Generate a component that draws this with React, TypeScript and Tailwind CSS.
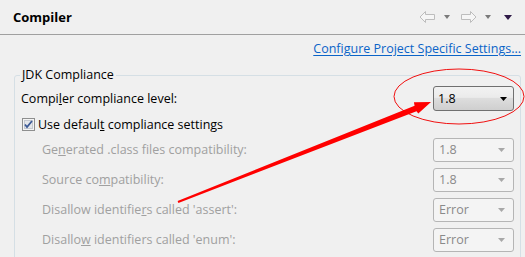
import React from "react";

const font = { fontFamily: '"Open Sans", "Noto Sans CJK SC", sans-serif' };

function Combo({ value, disabled }: { value: string; disabled?: boolean }) {
  if (disabled) {
    return (
      <div className="flex h-[24px] w-[81px] items-center justify-between rounded-[3px] border border-[#b5b5b5] bg-[#f4f4f4] pl-[5px] pr-[8px] text-[#8a8a8a]">
        <span>{value}</span>
        <svg width="7" height="4" viewBox="0 0 7 4">
          <path d="M0 0H7L3.5 4Z" fill="#a8a8a8" />
        </svg>
      </div>
    );
  }
  return (
    <div className="flex h-[25px] w-[81px] items-center justify-between rounded-[3px] border border-[#707070] bg-[linear-gradient(#f2f2f2_0%,#ebebeb_45%,#dddddd_50%,#cfcfcf_100%)] pl-[4px] pr-[6px] text-black">
      <span>{value}</span>
      <svg width="7" height="4" viewBox="0 0 7 4">
        <path d="M0 0H7L3.5 4Z" fill="#000" />
      </svg>
    </div>
  );
}

function Row({ children, combo }: { children: React.ReactNode; combo: string }) {
  return (
    <div className="flex h-[24px] items-center justify-between pl-[21px]">
      <span className="text-[#a0a0a0]">{children}</span>
      <Combo value={combo} disabled />
    </div>
  );
}

export default function App() {
  return (
    <div className="relative h-[257px] w-[525px] overflow-hidden bg-[#f0f0f0] text-[12.5px] leading-[16px]" style={font}>
      <div className="flex h-[35px] items-center justify-between border-b border-[#a0a0a0] pl-[13px] pr-[13px]">
        <span className="text-[13px] font-bold text-black">Compiler</span>
        <div className="flex items-center">
          <svg width="17" height="12" viewBox="0 0 17 12" className="mr-[8px]">
            <path d="M1 6L6.5 0.5V3.5H15.5V8.5H6.5V11.5Z" fill="#f6f6f6" stroke="#bdbdbd" strokeWidth="1" />
          </svg>
          <svg width="6" height="4" viewBox="0 0 6 4" className="mr-[10px]">
            <path d="M0 0H6L3 4Z" fill="#7a7a7a" />
          </svg>
          <svg width="17" height="12" viewBox="0 0 17 12" className="mr-[8px]">
            <path d="M16 6L10.5 0.5V3.5H1.5V8.5H10.5V11.5Z" fill="#f6f6f6" stroke="#bdbdbd" strokeWidth="1" />
          </svg>
          <svg width="6" height="4" viewBox="0 0 6 4" className="mr-[13px]">
            <path d="M0 0H6L3 4Z" fill="#7a7a7a" />
          </svg>
          <svg width="8" height="5" viewBox="0 0 8 5">
            <path d="M0 0H8L4 5Z" fill="#2e1a47" />
          </svg>
        </div>
      </div>
      <div className="mt-[6px] flex justify-end pr-[4px]">
        <span className="text-[#0b64c8] underline underline-offset-[2px]">Configure Project Specific Settings...</span>
      </div>
      <fieldset className="ml-[14px] mr-[4px] mt-[10px] rounded-[3px] border border-[#d5dfe5] pb-[20px] pl-[6px] pr-[6px]">
        <legend className="ml-[-1px] px-[2px] text-black">JDK Compliance</legend>
        <div className="mt-[3px] flex h-[25px] items-center justify-between">
          <span className="text-black">
            Compi<u>l</u>er compliance level:
          </span>
          <Combo value="1.8" />
        </div>
        <div className="mt-[7px] flex h-[13px] items-center gap-[3px] pl-[1px]">
          <svg width="13" height="13" viewBox="0 0 13 13">
            <rect x="0.5" y="0.5" width="12" height="12" fill="#f4f4f4" stroke="#8e8f8f" />
            <rect x="2.5" y="2.5" width="8" height="8" fill="#e4e6ea" stroke="#c4c8cf" />
            <path d="M3 6.5L5 9L10 3" fill="none" stroke="#3c5a96" strokeWidth="1.8" />
          </svg>
          <span className="text-black">
            Use defaul<u>t</u> compliance settings
          </span>
        </div>
        <div className="mt-[7px] flex flex-col gap-[6px]">
          <Row combo="1.8">
            Ge<u>n</u>erated .class files compatibility:
          </Row>
          <Row combo="1.8">
            Source co<u>m</u>patibility:
          </Row>
          <Row combo="Error">
            Disallow identifie<u>r</u>s called 'assert':
          </Row>
          <Row combo="Error">
            Disallo<u>w</u> identifiers called 'enum':
          </Row>
        </div>
      </fieldset>
      <svg className="pointer-events-none absolute inset-0" width="525" height="257" viewBox="0 0 525 257">
        <ellipse cx="459" cy="96.5" rx="65" ry="27.5" fill="none" stroke="#f01010" strokeWidth="1" />
        <path d="M177.6 201 L178.4 203 L416.5 111.2 L418.3 113.5 L431 102 L413.9 102.3 L414.6 105.8 Z" fill="#ff0000" />
      </svg>
    </div>
  );
}
